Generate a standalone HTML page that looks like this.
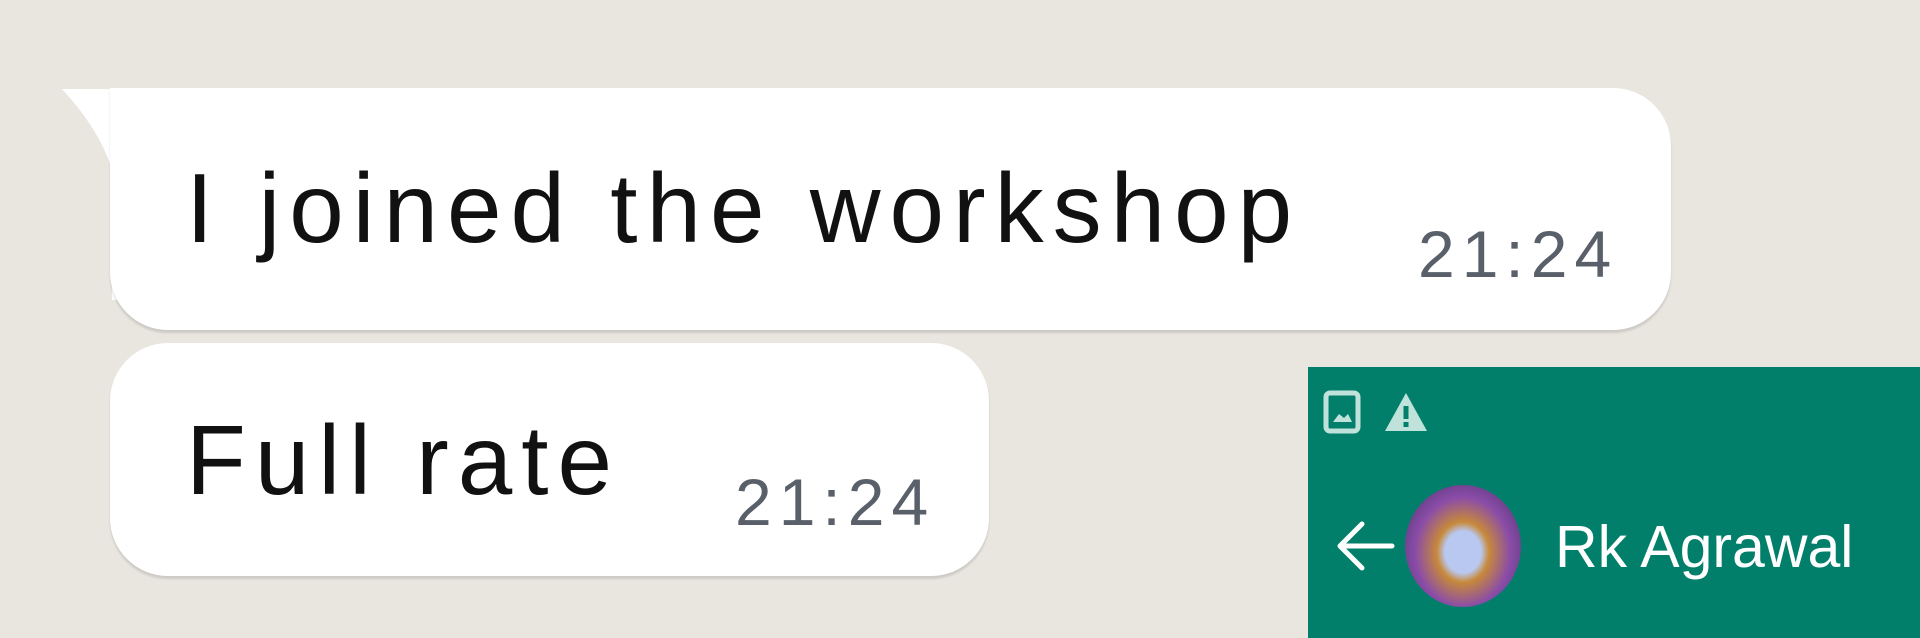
<!DOCTYPE html>
<html><head><meta charset="utf-8"><style>
*{margin:0;padding:0;box-sizing:border-box}
body{width:1920px;height:638px;overflow:hidden;background:#e9e6e0;position:relative;font-family:"Liberation Sans",sans-serif}
.b{position:absolute;background:#fff;border-radius:58px;box-shadow:0 3px 2px rgba(0,0,0,0.12)}
.t{position:absolute;color:#111;font-size:98px;white-space:nowrap;letter-spacing:9px}
.tm{position:absolute;color:#59606a;font-size:66px;white-space:nowrap;letter-spacing:7px}
.g{position:absolute;left:1308px;top:367px;width:612px;height:271px;background:#027f6a}
</style></head><body>
<svg style="position:absolute;left:0;top:0" width="200" height="340"><path d="M62 89 L160 89 L160 300 L112 300 L112 170 Q100 130 62 89 Z" fill="#fff"/></svg>
<div class="b" style="left:110px;top:88px;width:1561px;height:242px;border-top-left-radius:0"></div>
<div class="t" style="left:186px;top:152px;">I joined the workshop</div>
<div class="tm" style="left:1418px;top:216px;">21:24</div>
<div class="b" style="left:110px;top:343px;width:879px;height:233px"></div>
<div class="t" style="left:186px;top:404px;">Full rate</div>
<div class="tm" style="left:735px;top:464px;">21:24</div>
<div class="g">
 <svg style="position:absolute;left:14px;top:22px" width="130" height="50">
  <rect x="4" y="4" width="32" height="38" rx="4" fill="none" stroke="#bfe3db" stroke-width="5"/>
  <path d="M11 33 L17 25 L22 29 L26 25 L30 33 Z" fill="#bfe3db"/>
  <path d="M84 4 L105 42 L63 42 Z" fill="#bfe3db"/>
  <rect x="81.5" y="17" width="5" height="13" fill="#027f6a"/><rect x="81.5" y="33" width="5" height="5" fill="#027f6a"/>
 </svg>
 <svg style="position:absolute;left:24px;top:150px" width="70" height="60"><path d="M60 29 H8 M30 7 L8 29 L30 51" fill="none" stroke="#fff" stroke-width="5" stroke-linecap="round" stroke-linejoin="round"/></svg>
 <div style="position:absolute;left:97px;top:118px;width:116px;height:122px;border-radius:50%;background:radial-gradient(ellipse at 50% 55%,#b9c8f0 0 22%,#c7893a 32%,#8a4ca8 58%,#5a3a7a 85%)"></div>
 <div style="position:absolute;left:247px;top:146px;color:#fff;font-size:59px;white-space:nowrap">Rk Agrawal</div>
</div>
</body></html>
